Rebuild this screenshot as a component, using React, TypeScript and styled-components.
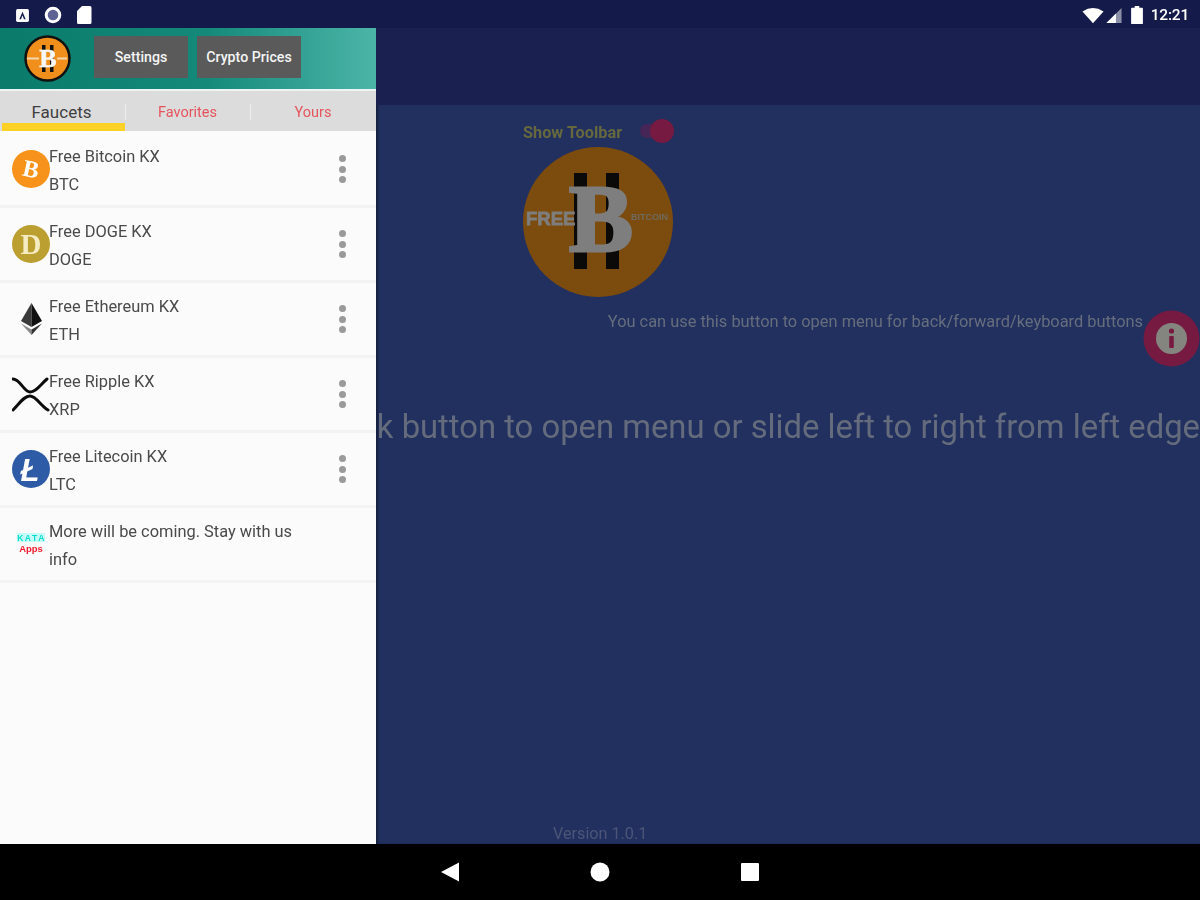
import React from 'react';
import styled, { createGlobalStyle } from 'styled-components';

const Global = createGlobalStyle`
  html, body { margin: 0; padding: 0; background: #000; }
  body { font-family: Roboto, "Liberation Sans", sans-serif; }
`;

const Screen = styled.div`
  width: 1200px;
  height: 900px;
  display: flex;
  flex-direction: column;
  overflow: hidden;
  filter: blur(0.7px);
`;

const StatusBar = styled.header`
  height: 28px;
  flex: none;
  box-sizing: border-box;
  background: #141a49;
  display: flex;
  align-items: center;
  justify-content: space-between;
  padding: 2px 11px 0 15px;
  color: #fff;
`;
const StatusGroup = styled.div`
  display: flex;
  align-items: center;
  gap: ${(p: { $gap: number }) => p.$gap}px;
`;
const Clock = styled.span`
  font-size: 15.5px;
  font-weight: 500;
  letter-spacing: -0.2px;
  margin-top: -1px;
`;

const Body = styled.div`
  flex: 1;
  display: flex;
  min-height: 0;
`;

const Drawer = styled.aside`
  width: 376px;
  flex: none;
  background: #fbfbfb;
  display: flex;
  flex-direction: column;
  z-index: 1;
`;
const DrawerHead = styled.div`
  height: 61px;
  flex: none;
  display: flex;
  align-items: center;
  padding: 0 0 4px 24px;
  box-sizing: border-box;
  background: linear-gradient(90deg, #0a7b6b 0%, #14897a 55%, #4bb5a8 100%);
  box-shadow: 0 2px 0 #eef4f3;
  margin-bottom: 2px;
`;
const HeadButton = styled.button`
  height: 42px;
  width: ${(p: { $w: number }) => p.$w}px;
  border: 0;
  padding: 1px 0 0;
  margin-right: 9px;
  background: #5a5a5a;
  color: #f4f4f4;
  font: 500 14.2px Roboto, sans-serif;
`;
const HeadLogo = styled.svg`
  width: 47px;
  height: 47px;
  margin: 4px 23px 0 0;
  flex: none;
`;

const Tabs = styled.nav`
  height: 40px;
  flex: none;
  background: #dcdcdc;
  padding-left: 2px;
  margin-bottom: 2px;
  display: flex;
`;
const Tab = styled.div<{ $active?: boolean; $w: number }>`
  width: ${(p) => p.$w}px;
  box-sizing: border-box;
  display: flex;
  align-items: center;
  justify-content: center;
  padding: 10px ${(p) => (p.$active ? 4 : 0)}px 0 0;
  font-size: ${(p) => (p.$active ? 17 : 14.5)}px;
  color: ${(p) => (p.$active ? '#3f3f3f' : '#e5545c')};
  border-bottom: 8px solid ${(p) => (p.$active ? '#fbd126' : 'transparent')};
  position: relative;
  &:not(:last-child)::after {
    content: '';
    position: absolute;
    right: -1px;
    top: 13px;
    height: 16px;
    width: 1px;
    background: #efefef;
  }
`;

const Row = styled.div`
  height: 72px;
  flex: none;
  display: flex;
  align-items: center;
  padding-left: 12px;
  border-bottom: 3px solid #f3f3f3;
`;
const RowIcon = styled.svg`
  width: 38px;
  height: 38px;
  flex: none;
`;
const RowText = styled.div`
  flex: 1;
  display: flex;
  flex-direction: column;
  font-size: 16.4px;
  line-height: 28px;
  color: #4a4a4a;
  margin: 3px 0 0 -1px;
`;
const Dots = styled.div`
  width: 7px;
  display: flex;
  flex-direction: column;
  gap: 3.7px;
  margin-right: 30px;
  span {
    width: 7px;
    height: 7px;
    border-radius: 50%;
    background: #9a9a9a;
  }
`;

const Main = styled.main`
  flex: 1;
  min-width: 0;
  display: flex;
  flex-direction: column;
  background: #22305f;
  overflow: hidden;
  box-shadow: inset 2px 0 2px rgba(0, 0, 0, 0.35);
`;
const MainBar = styled.div`
  height: 77px;
  flex: none;
  background: #1a2050;
`;
const ToggleRow = styled.div`
  display: flex;
  align-items: center;
  margin: 14px 0 0 147px;
  height: 24px;
`;
const ToggleLabel = styled.span`
  font-size: 16.3px;
  font-weight: 700;
  color: #66683e;
  width: 117px;
  margin-top: 2px;
`;
const Toggle = styled.div`
  width: 34px;
  height: 24px;
  position: relative;
  &::before {
    content: '';
    position: absolute;
    left: 0;
    top: 5px;
    width: 26px;
    height: 14px;
    border-radius: 7px;
    background: #452656;
  }
  &::after {
    content: '';
    position: absolute;
    right: 0;
    top: 0;
    width: 24px;
    height: 24px;
    border-radius: 50%;
    background: #761a42;
  }
`;
const BigLogo = styled.svg`
  width: 150px;
  height: 150px;
  margin: 4px 0 0 147px;
  flex: none;
`;
const HintRow = styled.div`
  display: flex;
  justify-content: flex-end;
  align-items: center;
  height: 56px;
  margin-top: 13px;
`;
const Hint = styled.span`
  font-size: 16.4px;
  color: #666d7d;
  margin-top: -33px;
  white-space: nowrap;
`;
const InfoIcon = styled.svg`
  width: 57px;
  height: 57px;
  flex: none;
`;
const Lead = styled.div`
  display: flex;
  justify-content: flex-end;
  margin-top: 39px;
  font-size: 32.8px;
  line-height: 44px;
  color: #646b7c;
  white-space: nowrap;
`;
const Version = styled.div`
  margin: auto 0 0 177px;
  font-size: 16.2px;
  line-height: 20px;
  color: #4c5578;
`;

const NavBar = styled.footer`
  height: 56px;
  flex: none;
  background: #000;
  display: flex;
  align-items: center;
  justify-content: center;
  gap: 130px;
`;

const items = [
  { name: 'Free Bitcoin KX', code: 'BTC', icon: 'btc', menu: true },
  { name: 'Free DOGE KX', code: 'DOGE', icon: 'doge', menu: true },
  { name: 'Free Ethereum KX', code: 'ETH', icon: 'eth', menu: true },
  { name: 'Free Ripple KX', code: 'XRP', icon: 'xrp', menu: true },
  { name: 'Free Litecoin KX', code: 'LTC', icon: 'ltc', menu: true },
  { name: 'More will be coming. Stay with us', code: 'info', icon: 'kata', menu: false },
];

function CoinIcon({ kind }: { kind: string }) {
  return (
    <RowIcon viewBox="0 0 38 38">
      {kind === 'btc' && (
        <>
          <circle cx="19" cy="19" r="19" fill="#f7931a" />
          <text x="19" y="27" textAnchor="middle" fontSize="24" fontWeight="700" fontFamily="Liberation Serif" fill="#fff" transform="rotate(12 19 19)">B</text>
        </>
      )}
      {kind === 'doge' && (
        <>
          <circle cx="19" cy="19" r="19" fill="#bb9f31" />
          <text x="19" y="29" textAnchor="middle" fontSize="29" fontWeight="700" fontFamily="Liberation Serif" fill="#f5ecc4">D</text>
        </>
      )}
      {kind === 'eth' && (
        <>
          <polygon points="19.5,3 9,21 19.5,27" fill="#3a3a3a" />
          <polygon points="19.5,3 30,21 19.5,27" fill="#111" />
          <polygon points="9,23.5 19.5,29.5 19.5,35" fill="#8a8a8a" />
          <polygon points="30,23.5 19.5,29.5 19.5,35" fill="#333" />
        </>
      )}
      {kind === 'xrp' && (
        <g fill="none" stroke="#0c0c0c" strokeWidth="3" strokeLinecap="round">
          <path d="M1 4 C8 4 12 17 18 17 C24 17 28 10 35 4" />
          <path d="M1 35 C8 28 12 21 18 21 C24 21 29 31 36 35" />
        </g>
      )}
      {kind === 'ltc' && (
        <>
          <circle cx="19" cy="19" r="19" fill="#2d5ba6" />
          <text x="18" y="31" textAnchor="middle" fontSize="31" fontWeight="700" fontFamily="Liberation Sans" fontStyle="italic" fill="#fff">Ł</text>
        </>
      )}
      {kind === 'kata' && (
        <>
          <rect x="5" y="8" width="28" height="9" fill="#c4fbf7" />
          <text x="19.5" y="16" textAnchor="middle" fontSize="8.5" fontWeight="700" letterSpacing="1.6" fontFamily="Liberation Sans" fill="#05dccd">KATA</text>
          <text x="19" y="27" textAnchor="middle" fontSize="9.5" fontWeight="700" fontFamily="Liberation Sans" fill="#f01a2e">Apps</text>
        </>
      )}
    </RowIcon>
  );
}

export default function App() {
  return (
    <Screen>
      <Global />
      <StatusBar>
        <StatusGroup $gap={14}>
          <svg width="15" height="15" viewBox="0 0 14 14">
            <rect x="1" y="1" width="12" height="12" rx="1.5" fill="#fff" />
            <path d="M7 3.5 L4 10.5 H5.6 L7 7 L8.4 10.5 H10 Z" fill="#1a2050" />
          </svg>
          <svg width="18" height="18" viewBox="0 0 18 18">
            <circle cx="9" cy="9" r="6.8" fill="#5d6394" stroke="#fff" strokeWidth="3" />
          </svg>
          <svg width="16" height="20" viewBox="0 0 16 20">
            <path d="M6 1 H14 A1.5 1.5 0 0 1 15.5 2.5 V17.5 A1.5 1.5 0 0 1 14 19 H2.5 A1.5 1.5 0 0 1 1 17.5 V6 Z" fill="#fff" />
          </svg>
        </StatusGroup>
        <StatusGroup $gap={7}>
          <StatusGroup $gap={2}>
            <svg width="22" height="17" viewBox="0 0 24 18">
              <path d="M0.5 4.5 Q12 -3 23.5 4.5 L12 17.5 Z" fill="#fff" />
            </svg>
            <svg width="17" height="17" viewBox="0 0 17 18">
              <polygon points="0,17 16,1 16,17" fill="#8b8fa8" />
              <polygon points="0,17 10,7 10,17" fill="#fff" />
            </svg>
          </StatusGroup>
          <svg width="14" height="20" viewBox="0 0 14 22">
            <path d="M4.5 1 H9.5 V3 H12.5 A1 1 0 0 1 13.5 4 V20 A1 1 0 0 1 12.5 21 H1.5 A1 1 0 0 1 0.5 20 V4 A1 1 0 0 1 1.5 3 H4.5 Z" fill="#fff" />
          </svg>
          <Clock>12:21</Clock>
        </StatusGroup>
      </StatusBar>

      <Body>
        <Drawer>
          <DrawerHead>
            <HeadLogo viewBox="0 0 47 47">
              <circle cx="23.5" cy="23.5" r="22" fill="#f18f1c" stroke="#111" strokeWidth="2.5" />
              <rect x="18" y="10" width="3.5" height="27" fill="#111" />
              <rect x="26" y="10" width="3.5" height="27" fill="#111" />
              <rect x="3" y="22.5" width="12" height="2" fill="#f6d7ad" />
              <rect x="33" y="22.5" width="10" height="2" fill="#f6d7ad" />
              <text x="24" y="32" textAnchor="middle" fontSize="26" fontWeight="700" fontFamily="Liberation Serif" fill="#f8f8f8" stroke="#f8f8f8" strokeWidth="0.6">B</text>
            </HeadLogo>
            <HeadButton $w={94}>Settings</HeadButton>
            <HeadButton $w={104}>Crypto Prices</HeadButton>
          </DrawerHead>
          <Tabs>
            <Tab $active $w={123}>Faucets</Tab>
            <Tab $w={125}>Favorites</Tab>
            <Tab $w={126}>Yours</Tab>
          </Tabs>
          {items.map((item) => (
            <Row key={item.code}>
              <CoinIcon kind={item.icon} />
              <RowText>
                <span>{item.name}</span>
                <span>{item.code}</span>
              </RowText>
              {item.menu && (
                <Dots>
                  <span />
                  <span />
                  <span />
                </Dots>
              )}
            </Row>
          ))}
        </Drawer>

        <Main>
          <MainBar />
          <ToggleRow>
            <ToggleLabel>Show Toolbar</ToggleLabel>
            <Toggle />
          </ToggleRow>
          <BigLogo viewBox="0 0 150 150">
            <circle cx="75" cy="75" r="75" fill="#7c4b0e" />
            <rect x="51" y="26" width="13" height="96" fill="#0b0a08" />
            <rect x="83" y="26" width="13" height="96" fill="#0b0a08" />
            <text x="78" y="104" textAnchor="middle" fontSize="96" fontWeight="700" fontFamily="Liberation Serif" fill="#7e7e7e" stroke="#7e7e7e" strokeWidth="3">B</text>
            <text x="3" y="78" fontSize="18.5" fontWeight="700" fontFamily="Liberation Sans" fill="#7e7e7e" stroke="#7e7e7e" strokeWidth="0.8">FREE</text>
            <text x="108" y="73" fontSize="9" fontWeight="700" fontFamily="Liberation Sans" fill="#6e6a5c">BITCOIN</text>
          </BigLogo>
          <HintRow>
            <Hint>You can use this button to open menu for back/forward/keyboard buttons</Hint>
            <InfoIcon viewBox="0 0 57 57">
              <circle cx="28.5" cy="28.5" r="28" fill="#761a42" />
              <circle cx="28.5" cy="28.5" r="15.5" fill="#858580" />
              <circle cx="28.5" cy="21" r="2.6" fill="#761a42" />
              <rect x="26.2" y="26" width="4.6" height="12" rx="1" fill="#761a42" />
            </InfoIcon>
          </HintRow>
          <Lead>Click button to open menu or slide left to right from left edge</Lead>
          <Version>Version 1.0.1</Version>
        </Main>
      </Body>

      <NavBar>
        <svg width="20" height="20" viewBox="0 0 20 20">
          <polygon points="1,10 19,0.5 19,19.5" fill="#fff" />
        </svg>
        <svg width="20" height="20" viewBox="0 0 20 20">
          <circle cx="10" cy="10" r="9.5" fill="#fff" />
        </svg>
        <svg width="20" height="20" viewBox="0 0 20 20">
          <rect x="1" y="1" width="18" height="18" rx="1" fill="#fff" />
        </svg>
      </NavBar>
    </Screen>
  );
}
